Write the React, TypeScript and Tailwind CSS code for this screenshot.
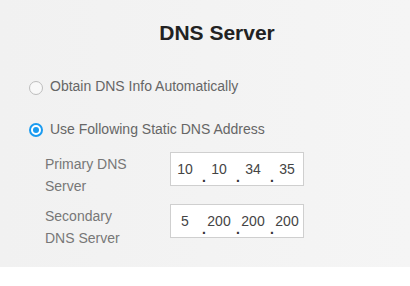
import React from "react";

function Radio({ checked }: { checked?: boolean }) {
  return checked ? (
    <span className="mt-[4px] flex h-[14px] w-[14px] shrink-0 items-center justify-center rounded-full border-2 border-[#1a9bf0] bg-white">
      <span className="h-[6px] w-[6px] rounded-full bg-[#1a9bf0]" />
    </span>
  ) : (
    <span className="mt-[5px] h-[14px] w-[14px] shrink-0 rounded-full border border-[#bdbdbd] bg-[#f8f8f8]" />
  );
}

function IpBox({ parts }: { parts: string[] }) {
  return (
    <div className="flex h-[34px] w-[134px] border border-[#cfcfcf] bg-white text-[14px] text-[#444]">
      {parts.map((p, i) => (
        <React.Fragment key={i}>
          {i > 0 && (
            <span className="w-[6px] self-end pb-[1px] pl-[3px] font-bold leading-none text-[#333]">
              .
            </span>
          )}
          <span className="flex w-[28px] items-center justify-center">{p}</span>
        </React.Fragment>
      ))}
    </div>
  );
}

function DnsRow({ label, parts }: { label: React.ReactNode; parts: string[] }) {
  return (
    <div className="flex items-start">
      <div className="ml-[45px] mr-[30px] mt-[1px] w-[95px] text-[14px] leading-[22px] text-[#777]">
        {label}
      </div>
      <IpBox parts={parts} />
    </div>
  );
}

export default function App() {
  return (
    <div
      className="h-[286px] w-[410px] bg-white"
      style={{ fontFamily: '"Liberation Sans", Arial, sans-serif' }}
    >
      <div className="h-[267px] bg-gradient-to-r from-[#f1f1f1] to-[#f5f5f5] pt-[22px]">
        <h1 className="pl-[24px] text-center text-[21px] font-bold leading-none text-[#222]">
          DNS Server
        </h1>

        <div className="mt-[33px] flex items-start gap-[7px] pl-[29px] text-[14px] leading-[20px] text-[#666]">
          <Radio />
          <span>Obtain DNS Info Automatically</span>
        </div>

        <div className="mt-[23px] flex items-start gap-[7px] pl-[29px] text-[14px] leading-[20px] text-[#666]">
          <Radio checked />
          <span>Use Following Static DNS Address</span>
        </div>

        <div className="mt-[13px]">
          <DnsRow
            label={
              <>
                Primary DNS
                <br />
                Server
              </>
            }
            parts={["10", "10", "34", "35"]}
          />
        </div>
        <div className="mt-[7px]">
          <DnsRow
            label={
              <>
                Secondary
                <br />
                DNS Server
              </>
            }
            parts={["5", "200", "200", "200"]}
          />
        </div>
      </div>
    </div>
  );
}
